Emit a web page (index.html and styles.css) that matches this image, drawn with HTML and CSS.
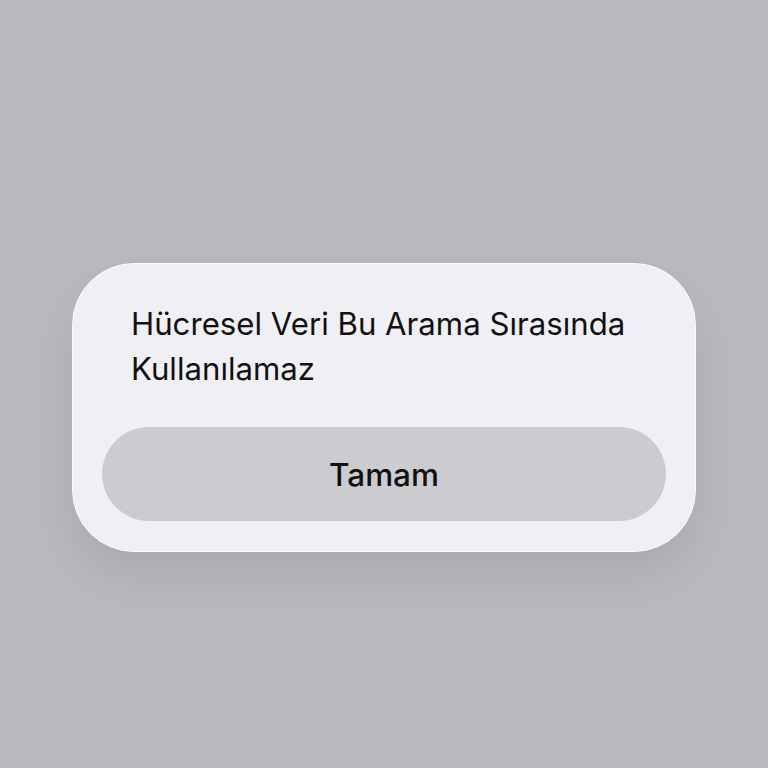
FILE: index.html
```html
<!DOCTYPE html>
<html>
<head>
<meta charset="utf-8">
<link rel="stylesheet" href="styles.css">
</head>
<body>
<div class="screen">
  <div class="alert">
    <p class="message">Hücresel Veri Bu Arama Sırasında Kullanılamaz</p>
    <button class="ok">Tamam</button>
  </div>
</div>
</body>
</html>
```

FILE: styles.css
```css
html, body {
  margin: 0;
  padding: 0;
  background: #b9b8bd;
}
.screen {
  width: 768px;
  height: 768px;
  box-sizing: border-box;
  padding: 263px 72px 0 72px;
  font-family: Inter, "Noto Sans", sans-serif;
}
.alert {
  width: 624px;
  height: 289px;
  box-sizing: border-box;
  background: #efeff4;
  border: 1.5px solid #fbfbfd;
  border-radius: 62px;
  box-shadow: 0 24px 48px rgba(0, 0, 0, 0.08);
  padding: 38px 29px 30px 29px;
  display: flex;
  flex-direction: column;
}
.message {
  margin: 0 0 0 29px;
  font-size: 31.2px;
  line-height: 45px;
  color: #111113;
  letter-spacing: 0;
  flex: 1;
}
.ok {
  height: 94px;
  border: none;
  border-radius: 47px;
  background: #cbcbd0;
  font-family: Inter, "Noto Sans", sans-serif;
  font-size: 31.5px;
  font-weight: 500;
  color: #111113;
  padding: 0;
}
```
